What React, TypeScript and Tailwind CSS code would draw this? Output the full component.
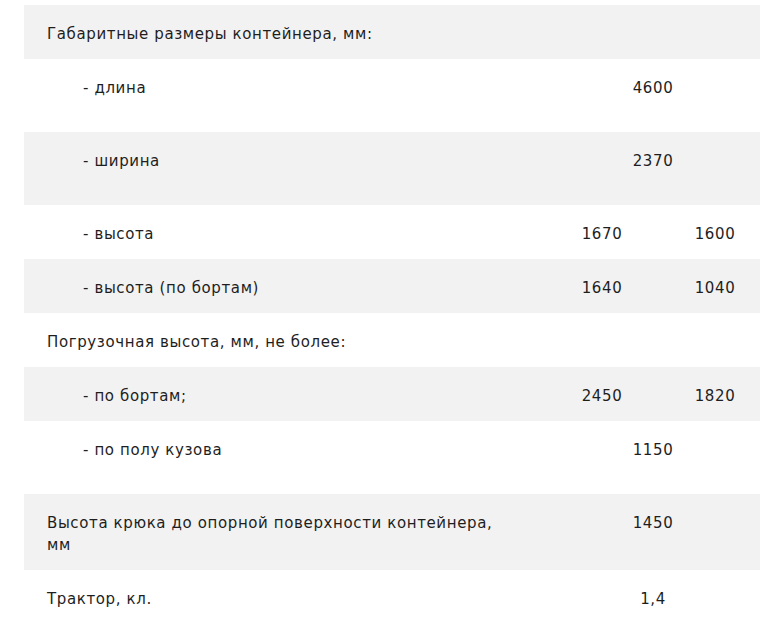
type Row = {
  label: string;
  sub?: boolean;
  a?: string;
  b?: string;
  span?: string;
  tall?: boolean;
};

const rows: Row[] = [
  { label: 'Габаритные размеры контейнера, мм:' },
  { label: '- длина', sub: true, span: '4600', tall: true },
  { label: '- ширина', sub: true, span: '2370', tall: true },
  { label: '- высота', sub: true, a: '1670', b: '1600' },
  { label: '- высота (по бортам)', sub: true, a: '1640', b: '1040' },
  { label: 'Погрузочная высота, мм, не более:' },
  { label: '- по бортам;', sub: true, a: '2450', b: '1820' },
  { label: '- по полу кузова', sub: true, span: '1150', tall: true },
  { label: 'Высота крюка до опорной поверхности контейнера, мм', span: '1450' },
  { label: 'Трактор, кл.', span: '1,4' },
];

export default function App() {
  return (
    <div className="bg-white min-h-[619px] pt-[5px] px-[24px] pr-[10px] text-[#1e1e1e] text-[15px] leading-[22px] tracking-[0.62px] font-['DejaVu_Sans',sans-serif]">
      {rows.map((r, i) => (
        <div
          key={i}
          className={`grid grid-cols-[516px_124px_96px] ${i % 2 === 0 ? 'bg-[#f2f2f2]' : 'bg-white'} ${
            r.tall ? 'min-h-[73px]' : 'min-h-[54px]'
          }`}
        >
          <div className={`pt-[18px] pb-[14px] pr-[30px] ${r.sub ? 'pl-[59px]' : 'pl-[23px]'}`}>{r.label}</div>
          {r.span !== undefined ? (
            <div className="col-span-2 pt-[18px] pb-[14px] pl-[6px] text-center">{r.span}</div>
          ) : (
            <>
              <div className="pt-[18px] pb-[14px] text-center">{r.a}</div>
              <div className="pt-[18px] pb-[14px] pl-[6px] text-center">{r.b}</div>
            </>
          )}
        </div>
      ))}
    </div>
  );
}
